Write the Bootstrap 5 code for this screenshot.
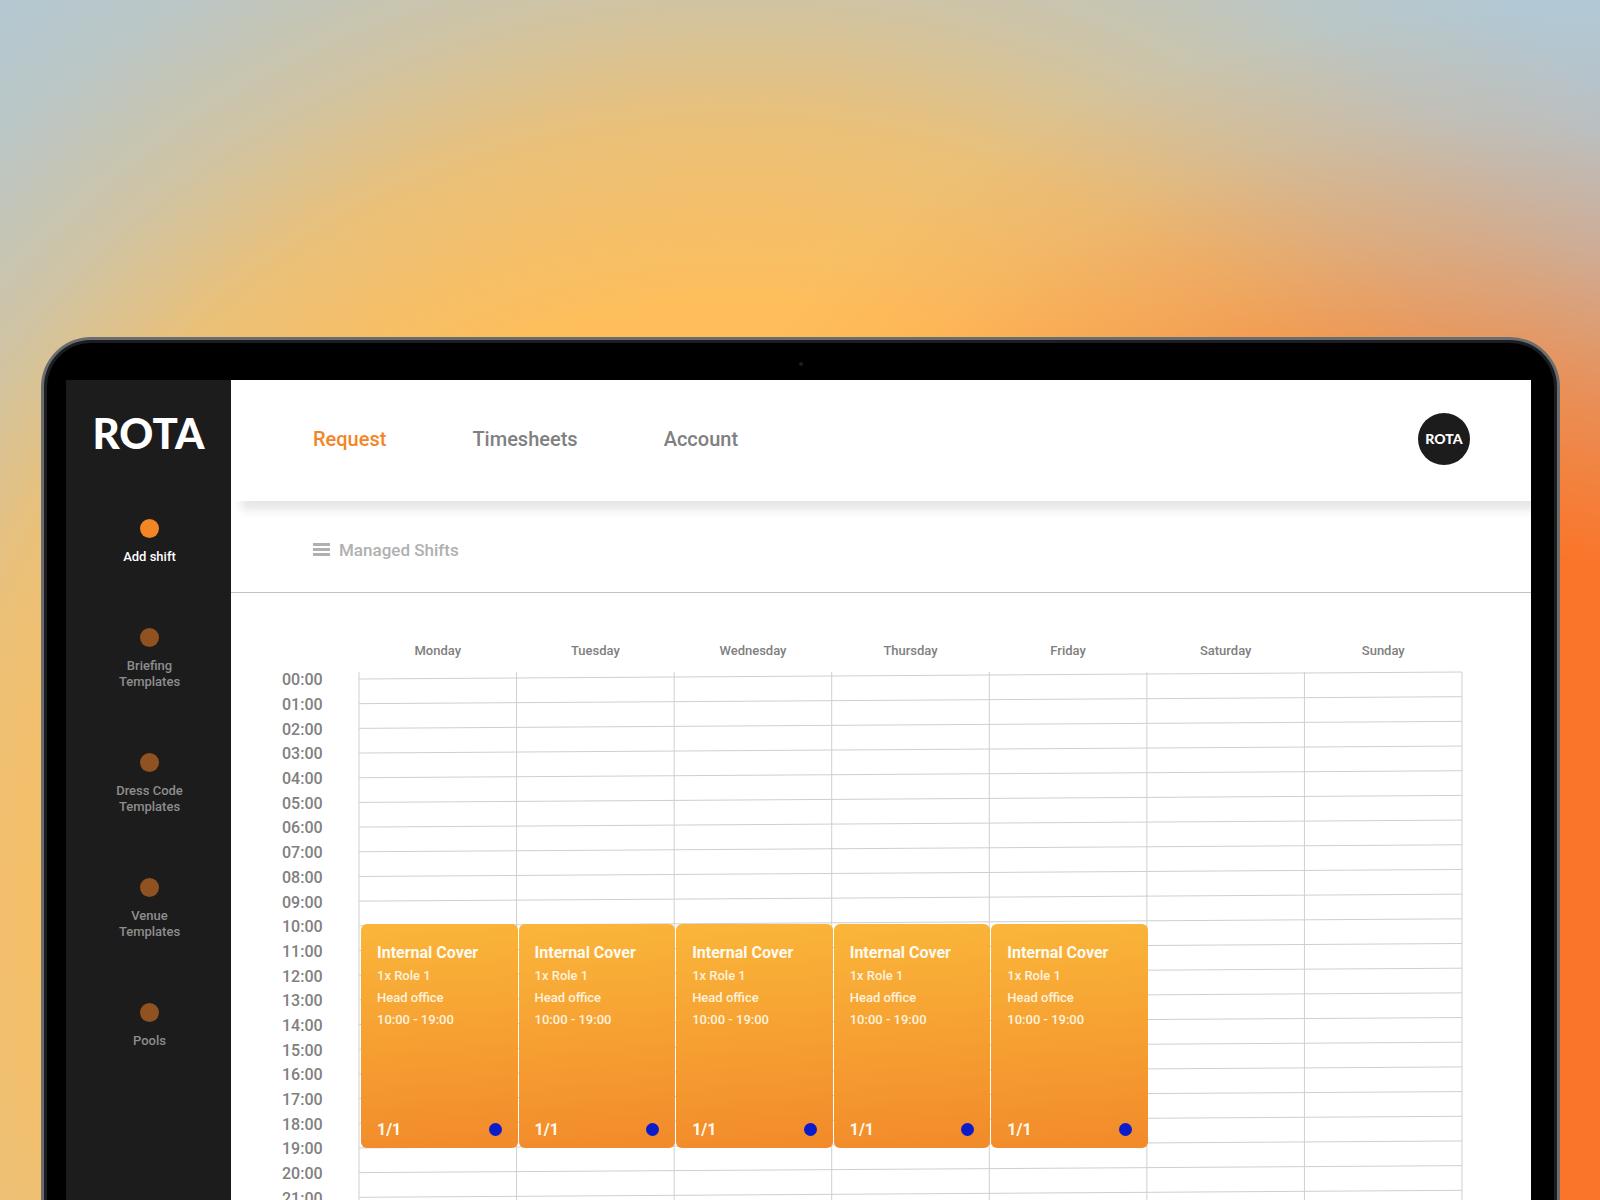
<!DOCTYPE html>
<html lang="en">
<head>
<meta charset="utf-8">
<meta name="viewport" content="width=device-width, initial-scale=1">
<title>ROTA – Managed Shifts</title>
<link href="https://cdn.jsdelivr.net/npm/bootstrap@5.3.0/dist/css/bootstrap.min.css" rel="stylesheet">
<style>
  body { font-family: Roboto, "Liberation Sans", sans-serif; font-weight: 500; color: #808080; }
  .stage {
    height: 100vh; padding: 337px 40px 0 41px;
    background:
      radial-gradient(circle at 93% 81%, #fa752a 0, #fa752a 420px, rgba(250,117,42,.68) 580px, rgba(250,117,42,.32) 730px, rgba(250,117,42,.1) 850px, rgba(250,117,42,0) 960px),
      radial-gradient(circle at 46% 77%, #ffbd58 0, #febe5b 620px, rgba(250,190,95,.78) 800px, rgba(246,190,100,.42) 935px, rgba(240,190,110,.14) 1075px, rgba(240,190,110,0) 1200px),
      #b2c8d4;
  }
  .laptop {
    border: 3px solid #6a6d70; border-bottom: 0; border-radius: 50px 50px 0 0;
    background: #000; box-shadow: inset 0 0 0 3px #1b1d21; padding: 40px 26px 0 22px;
  }
  .camera { width: 4px; height: 4px; top: -18px; background: #1d1f26; }
  .side { width: 165px; background: #1c1c1c; padding: 29px 0 0; }
  .logo { font-family: Lato, sans-serif; font-weight: 900; color: #fff; font-size: 42px; line-height: 48px; }
  .side-nav { margin-top: 62px; padding-left: 2px; gap: 63px; }
  .side-link { font-size: 13px; line-height: 16px; color: #8d8d8d; gap: 11px; }
  .side-link.active { color: #fff; }
  .dot { width: 19px; height: 19px; background: #8f5220; }
  .active .dot { background: #f28625; }
  .topbar { height: 121px; padding: 0 61px 4px 82px; background: #fff; box-shadow: 8px 11px 9px -2px rgba(0,0,0,.1); z-index: 1; }
  .top-nav { gap: 86px; font-size: 20px; line-height: 24px; }
  .top-nav a { color: #808080; }
  .top-nav a.active { color: #f28625; }
  .avatar { width: 52px; height: 52px; background: #1c1c1c; font-size: 14px; line-height: 16px; border: 0; }
  .subbar { height: 92px; padding: 6px 82px 0; border-bottom: 1px solid #c2c2c2; }
  .managed { color: #b0b0b0; font-size: 17px; line-height: 24px; gap: 9px; }
  .planner { padding: 50px 69px 0 51px; }
  .days { padding-left: 77px; font-size: 13px; line-height: 16px; }
  .hours { width: 77px; height: 543px; margin-top: 1px; font-size: 16px; line-height: 24px; }
  .slots { display: grid; grid-template-columns: repeat(7, 1fr); grid-template-rows: repeat(22, 1fr); height: 543px; margin-top: 12px; }
  .rules { top: -7px; left: 0; width: 100%; height: 550px; overflow: visible; }
  .rules line { stroke: #cfcfcf; stroke-width: 1; vector-effect: non-scaling-stroke; }
  .shift { grid-row: 11 / span 9; margin: -2px -1px 0 2px; padding: 17px 16px 8px 16px; border-radius: 6px; background: linear-gradient(175deg, #fab63a, #f28a2a); color: #fff2dc; font-size: 13px; line-height: 22px; }
  .shift h2 { font-size: 16px; line-height: 24px; font-weight: 700; color: #fffaf0; }
  .filled { font-size: 16px; line-height: 20px; font-weight: 700; color: #fffaf0; }
  .status { width: 13px; height: 13px; background: #0b1ccb; }
</style>
</head>
<body>
<div class="stage overflow-hidden">
  <div class="laptop">
    <div class="d-flex position-relative">
      <span class="camera rounded-circle position-absolute start-50"></span>
      <aside class="side flex-shrink-0 text-center">
        <a href="#" class="logo d-block text-decoration-none">ROTA</a>
        <nav class="side-nav d-flex flex-column align-items-center">
          <a href="#" class="side-link active d-flex flex-column align-items-center text-decoration-none"><span class="dot rounded-circle"></span>Add shift</a>
          <a href="#" class="side-link d-flex flex-column align-items-center text-decoration-none"><span class="dot rounded-circle"></span><span>Briefing<br>Templates</span></a>
          <a href="#" class="side-link d-flex flex-column align-items-center text-decoration-none"><span class="dot rounded-circle"></span><span>Dress Code<br>Templates</span></a>
          <a href="#" class="side-link d-flex flex-column align-items-center text-decoration-none"><span class="dot rounded-circle"></span><span>Venue<br>Templates</span></a>
          <a href="#" class="side-link d-flex flex-column align-items-center text-decoration-none"><span class="dot rounded-circle"></span>Pools</a>
        </nav>
      </aside>
      <main class="flex-grow-1 bg-white overflow-hidden">
        <header class="topbar d-flex align-items-center justify-content-between position-relative">
          <nav class="top-nav d-flex">
            <a href="#" class="active text-decoration-none">Request</a>
            <a href="#" class="text-decoration-none">Timesheets</a>
            <a href="#" class="text-decoration-none">Account</a>
          </nav>
          <button type="button" class="avatar logo rounded-circle p-0">ROTA</button>
        </header>
        <div class="subbar d-flex align-items-center">
          <a href="#" class="managed d-flex align-items-center text-decoration-none">
            <svg width="17" height="13" viewBox="0 0 17 13" fill="currentColor" aria-hidden="true"><path d="M0 0h17v3H0zM0 5h17v3H0zM0 10h17v3H0z"/></svg>
            Managed Shifts
          </a>
        </div>
        <section class="planner">
          <div class="days d-flex text-center">
            <div class="flex-fill w-100">Monday</div><div class="flex-fill w-100">Tuesday</div><div class="flex-fill w-100">Wednesday</div><div class="flex-fill w-100">Thursday</div><div class="flex-fill w-100">Friday</div><div class="flex-fill w-100">Saturday</div><div class="flex-fill w-100">Sunday</div>
          </div>
          <div class="d-flex pt-2">
            <div class="hours d-flex flex-column flex-shrink-0" id="hours"></div>
            <div class="slots position-relative flex-grow-1" id="slots">
              <svg class="rules position-absolute" viewBox="0 0 1103 550" preserveAspectRatio="none" aria-hidden="true" id="rules"></svg>
            </div>
          </div>
        </section>
      </main>
    </div>
  </div>
</div>
<script src="https://cdn.jsdelivr.net/npm/bootstrap@5.3.0/dist/js/bootstrap.bundle.min.js"></script>
<script>
  const hours = document.getElementById('hours');
  const slots = document.getElementById('slots');
  let lines = '';
  for (let h = 0; h < 22; h++) {
    hours.insertAdjacentHTML('beforeend', `<div class="d-flex align-items-center h-100">${String(h).padStart(2, '0')}:00</div>`);
    const y = h * 543 / 22;
    lines += `<line x1="0" y1="${y + 7}" x2="1103" y2="${y}"/>`;
  }
  for (let d = 0; d <= 7; d++) {
    const x = d * 1103 / 7;
    lines += `<line x1="${x}" y1="0" x2="${x}" y2="550"/>`;
  }
  document.getElementById('rules').innerHTML = lines;
  for (let d = 0; d < 5; d++) {
    slots.insertAdjacentHTML('beforeend', `
      <article class="shift position-relative d-flex flex-column">
        <h2 class="mb-0">Internal Cover</h2>
        <div>1x Role 1</div>
        <div>Head office</div>
        <div>10:00 - 19:00</div>
        <div class="d-flex align-items-center justify-content-between mt-auto"><span class="filled">1/1</span><span class="status rounded-circle"></span></div>
      </article>`);
  }
</script>
</body>
</html>
